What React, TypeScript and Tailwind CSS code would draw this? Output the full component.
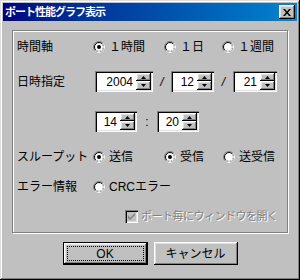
import React from 'react';

const raised =
  'shadow-[inset_-1px_-1px_0_#000,inset_1px_1px_0_#fff,inset_-2px_-2px_0_#808080,inset_2px_2px_0_#dfdfdf]';
const sunken =
  'shadow-[inset_1px_1px_0_#808080,inset_2px_2px_0_#000,inset_-1px_-1px_0_#fff,inset_-2px_-2px_0_#dfdfdf]';

const Radio: React.FC<{ checked?: boolean }> = ({ checked }) => (
  <svg width="12" height="12" viewBox="0 0 12 12" className="shrink-0">
    <circle cx="6" cy="6" r="5.5" fill="none" stroke="#808080" />
    <path d="M9.89 2.11 A5.5 5.5 0 0 1 2.11 9.89" fill="none" stroke="#fff" />
    <circle cx="6" cy="6" r="4.5" fill="#fff" stroke="#000" />
    <path d="M9.18 2.82 A4.5 4.5 0 0 1 2.82 9.18" fill="none" stroke="#dfdfdf" />
    {checked && <circle cx="6" cy="6" r="2" fill="#000" />}
  </svg>
);

const RadioItem: React.FC<{ label: string; checked?: boolean; className?: string }> = ({
  label,
  checked,
  className,
}) => (
  <div className={`flex items-center gap-[4px] ${className ?? ''}`}>
    <Radio checked={checked} />
    <span>{label}</span>
  </div>
);

const Arrow: React.FC<{ up?: boolean }> = ({ up }) => (
  <svg width="5" height="3" viewBox="0 0 5 3">
    <path d={up ? 'M2.5 0 L5 3 L0 3 Z' : 'M0 0 L5 0 L2.5 3 Z'} fill="#000" />
  </svg>
);

const SpinBox: React.FC<{ value: string; editW: string }> = ({ value, editW }) => (
  <div className={`flex h-[21px] p-[2px] bg-white ${sunken}`}>
    <div className={`${editW} h-full flex items-center justify-end pr-[3px] text-black`}>
      {value}
    </div>
    <div className="flex flex-col w-[15px] h-full">
      <div className={`h-[8px] bg-[#c0c0c0] flex items-center justify-center ${raised}`}>
        <Arrow up />
      </div>
      <div className={`h-[9px] bg-[#c0c0c0] flex items-center justify-center ${raised}`}>
        <Arrow />
      </div>
    </div>
  </div>
);

export default function App() {
  return (
    <div
      className={`w-[300px] h-[280px] bg-[#c0c0c0] p-[3px] flex flex-col text-[12px] leading-none text-black font-['Liberation_Sans','Noto_Sans_CJK_JP',sans-serif] shadow-[inset_-1px_-1px_0_#000,inset_1px_1px_0_#dfdfdf,inset_-2px_-2px_0_#808080,inset_2px_2px_0_#fff]`}
    >
      {/* title bar */}
      <div className="h-[18px] flex items-center justify-between pl-[2px] pr-[2px] bg-gradient-to-r from-[#000080] to-[#1084d0]">
        <span className="text-white font-bold text-[11px] tracking-[-1px]">ポート性能グラフ表示</span>
        <div className={`w-[16px] h-[14px] bg-[#c0c0c0] flex items-center justify-center ${raised}`}>
          <svg width="8" height="7" viewBox="0 0 8 7">
            <path d="M0 0 L2 0 L4 2.5 L6 0 L8 0 L5 3.5 L8 7 L6 7 L4 4.5 L2 7 L0 7 L3 3.5 Z" fill="#000" />
          </svg>
        </div>
      </div>

      {/* group box */}
      <div className="mt-[9px] ml-[9px] w-[276px] border border-[#808080] shadow-[inset_1px_1px_0_#fff,1px_1px_0_#fff] pt-[8px] pb-[9px] pl-[4px] flex flex-col">
        <div className="flex items-center h-[16px]">
          <span className="w-[76px]">時間軸</span>
          <RadioItem label="１時間" checked className="w-[71px]" />
          <RadioItem label="１日" className="w-[58px]" />
          <RadioItem label="１週間" />
        </div>

        <div className="flex items-center h-[21px] mt-[16px]">
          <span className="w-[78px]">日時指定</span>
          <SpinBox value="2004" editW="w-[39px]" />
          <span className="w-[18px] text-center italic">/</span>
          <SpinBox value="12" editW="w-[24px]" />
          <span className="w-[19px] text-center italic">/</span>
          <SpinBox value="21" editW="w-[25px]" />
        </div>

        <div className="flex items-center h-[21px] mt-[19px]">
          <span className="w-[78px]" />
          <SpinBox value="14" editW="w-[23px]" />
          <span className="w-[20px] text-center">:</span>
          <SpinBox value="20" editW="w-[23px]" />
        </div>

        <div className="flex items-center h-[16px] mt-[17px]">
          <span className="w-[76px]">スループット</span>
          <RadioItem label="送信" checked className="w-[71px]" />
          <RadioItem label="受信" checked className="w-[59px]" />
          <RadioItem label="送受信" />
        </div>

        <div className="flex items-center h-[16px] mt-[14px]">
          <span className="w-[76px]">エラー情報</span>
          <RadioItem label="CRCエラー" />
        </div>

        <div className="flex items-center h-[13px] mt-[15px] pl-[108px] gap-[3px]">
          <div className={`w-[13px] h-[13px] bg-[#c0c0c0] flex items-center justify-center ${sunken}`}>
            <svg width="7" height="7" viewBox="0 0 7 7">
              <path d="M0 2 L0 5 L2 7 L7 2 L7 0 L2 5 Z" fill="#808080" />
            </svg>
          </div>
          <span className="text-[11px] text-[#808080] [text-shadow:1px_1px_0_#fff] tracking-[-0.5px]">
            ポート毎にウィンドウを開く
          </span>
        </div>
      </div>

      {/* buttons */}
      <div className="flex justify-center gap-[6px] mt-[9px]">
        <div className="w-[85px] h-[23px] border border-black">
          <div className={`w-full h-full bg-[#c0c0c0] p-[3px] ${raised}`}>
            <div className="w-full h-full border border-dotted border-black flex items-center justify-center">
              OK
            </div>
          </div>
        </div>
        <div className={`w-[84px] h-[23px] bg-[#c0c0c0] flex items-center justify-center ${raised}`}>
          キャンセル
        </div>
      </div>
    </div>
  );
}
